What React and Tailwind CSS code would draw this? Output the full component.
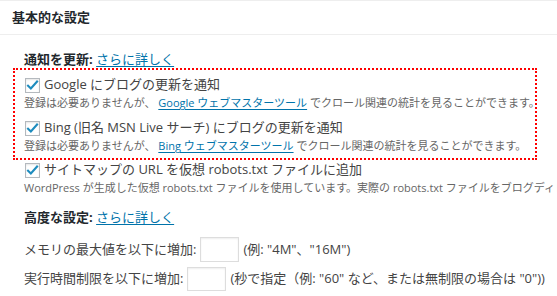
import React from 'react';

const Check = () => (
  <span className="w-[15px] h-[15px] shrink-0 border border-[#b4b9be] bg-white shadow-[inset_0_1px_2px_rgba(0,0,0,0.1)] flex items-center justify-center">
    <svg viewBox="0 0 16 16" className="w-[13px] h-[13px]">
      <path d="M2.5 8.2 L6 11.6 L13.6 3.2" fill="none" stroke="#1e8cbe" strokeWidth="2.6" strokeLinecap="square" />
    </svg>
  </span>
);

const Link = ({ children }) => (
  <a href="#" className="text-[#0073aa] underline underline-offset-2">{children}</a>
);

const Option = ({ label, tool }) => (
  <div>
    <label className="flex items-center gap-[4px] h-[20px] ml-px text-[13px] text-[#444]">
      <Check />
      <span>{label}</span>
    </label>
    <p className="h-[16px] leading-[16px] text-[11px] text-[#666] whitespace-nowrap">
      登録は必要ありませんが、 <Link>{tool}</Link> でクロール関連の統計を見ることができます。
    </p>
  </div>
);

export default function App() {
  return (
    <div
      className="w-[557px] h-[296px] bg-white overflow-hidden border-t border-[#eee]"
      style={{ fontFamily: '"Open Sans", "Noto Sans CJK JP", sans-serif' }}
    >
      {/* header */}
      <div className="h-[34px] px-3 flex items-center border-b border-[#eee]">
        <h2 className="text-[13px] font-bold text-[#23282d]">基本的な設定</h2>
      </div>

      <div className="pl-[13px] pt-[15px]">
        <p className="ml-[11px] h-[18px] leading-[18px] text-[13px] text-[#23282d]">
          <span className="font-bold">通知を更新:</span> <Link>さらに詳しく</Link>
        </p>

        {/* highlighted notification options */}
        <div className="w-[524px] border-2 border-dotted border-[#ff0000] pl-[9px] pt-[5px] pb-[4px] flex flex-col gap-[7px]">
          <Option label="Google にブログの更新を通知" tool="Google ウェブマスターツール" />
          <Option label="Bing (旧名 MSN Live サーチ) にブログの更新を通知" tool="Bing ウェブマスターツール" />
        </div>

        <div className="ml-[11px]">
          <label className="flex items-center gap-[4px] h-[20px] ml-px text-[13px] text-[#444]">
            <Check />
            <span>サイトマップの URL を仮想 robots.txt ファイルに追加</span>
          </label>
          <p className="h-[16px] leading-[16px] text-[11px] text-[#666] whitespace-nowrap">
            WordPress が生成した仮想 robots.txt ファイルを使用しています。実際の robots.txt ファイルをブログディレクトリに作成している場合は無効になります。
          </p>

          <p className="mt-[12px] h-[18px] leading-[18px] text-[13px] text-[#23282d]">
            <span className="font-bold">高度な設定:</span> <Link>さらに詳しく</Link>
          </p>

          <div className="mt-[11px] flex items-center gap-[4px] text-[13px] text-[#444] whitespace-nowrap">
            <span>メモリの最大値を以下に増加:</span>
            <input className="w-[39px] h-[25px] border border-[#ddd] shadow-[inset_0_1px_2px_rgba(0,0,0,0.07)] bg-white" />
            <span>(例: "4M"、"16M")</span>
          </div>

          <div className="mt-[5px] flex items-center gap-[4px] text-[13px] text-[#444] whitespace-nowrap">
            <span>実行時間制限を以下に増加:</span>
            <input className="w-[39px] h-[24px] border border-[#ddd] shadow-[inset_0_1px_2px_rgba(0,0,0,0.07)] bg-white" />
            <span>(秒で指定（例: "60" など、または無制限の場合は "0"))</span>
          </div>
        </div>
      </div>
    </div>
  );
}
